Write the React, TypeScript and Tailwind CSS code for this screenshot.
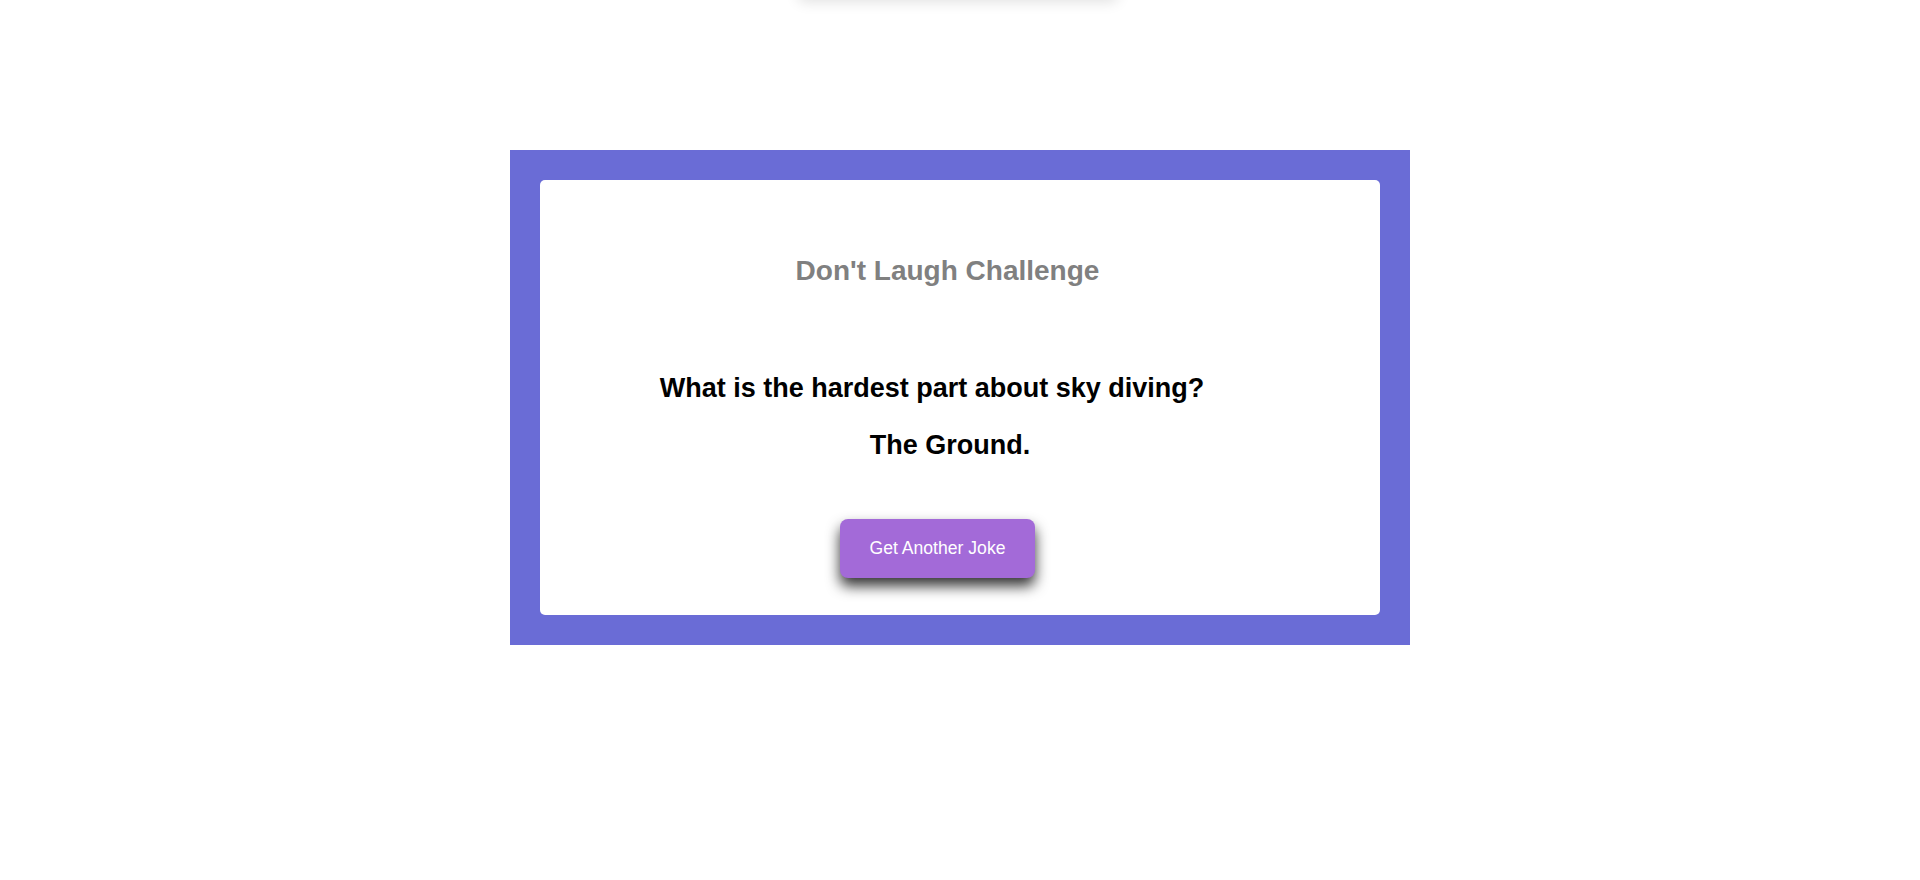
export default function App() {
  return (
    <div className="min-h-screen w-full bg-white flex flex-col items-center font-['Liberation_Sans',Arial,sans-serif]">
      {/* header bar, mostly scrolled off the top */}
      <div className="w-[320px] h-[60px] -mt-[60px] ml-[-4px] bg-white rounded-md shadow-[0_2px_14px_rgba(0,0,0,0.12)]"></div>

      {/* joke box */}
      <section className="mt-[150px] w-[900px] bg-[#6a6cd6] p-[30px]">
        <div className="w-full bg-white rounded-[5px] flex flex-col items-center pt-[75px] pb-[37px]">
          <h1 className="text-[28px] leading-[32px] font-bold text-[#808080] pr-[25px]">
            Don't Laugh Challenge
          </h1>
          <p className="mt-[86px] text-[27px] leading-[31px] font-bold text-black pr-[56px]">
            What is the hardest part about sky diving?
          </p>
          <p className="mt-[26px] text-[27px] leading-[31px] font-bold text-black pr-[20px]">
            The Ground.
          </p>
          <button className="mt-[58px] mr-[45px] w-[195px] h-[59px] rounded-[8px] bg-[#a36ad8] text-white text-[17.6px] shadow-[0_8px_14px_rgba(0,0,0,0.8)] cursor-pointer">
            Get Another Joke
          </button>
        </div>
      </section>
    </div>
  );
}
